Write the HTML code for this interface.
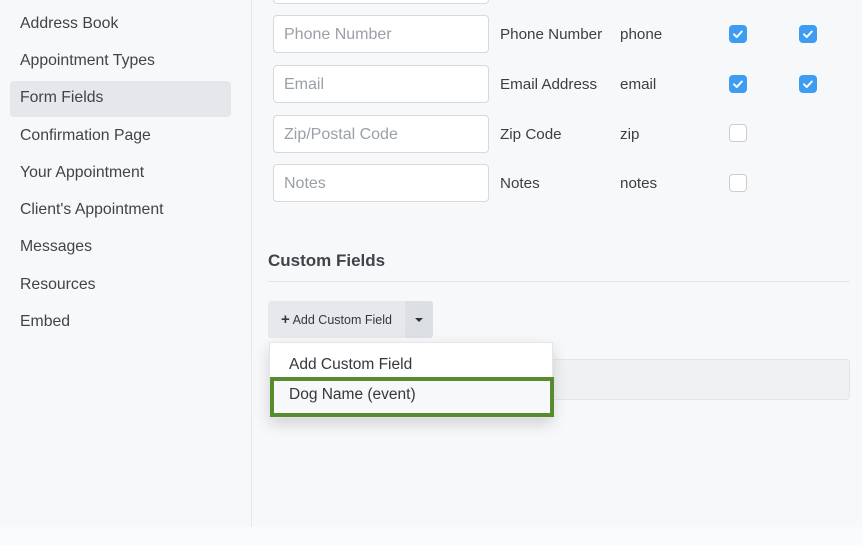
<!DOCTYPE html>
<html><head><style>
body{margin:0;width:862px;height:545px;background:#f7f8fa;font-family:"Liberation Sans",sans-serif;position:relative;overflow:hidden;color:#3a3f45}
.a{position:absolute}
.side{left:0;top:0;width:251px;height:527px;border-right:1px solid #e6e8eb}
.nav{left:20px;font-size:15.8px;color:#3f444a}
.inp{left:273px;border:1px solid #d6d9dd;border-radius:4px;background:#fff;font-size:16px;color:#9aa0a7;line-height:38px;padding-left:10px;box-sizing:border-box;width:216px;height:38px}
.lbl{left:500px;font-size:15.2px;color:#3a3f45}
.key{left:620px;font-size:15.2px;color:#3a3f45}
.cb{width:18px;height:18px;border-radius:4px;box-sizing:border-box}
.on{background:#3d9df2}
.off{border:1px solid #c9cdd2;background:#fff}
</style></head><body>
<div class="a side"></div>
<div class="a" style="left:10px;top:81px;width:221px;height:36px;background:#e5e7ea;border-radius:4px"></div>
<div class="a nav" style="top:15px">Address Book</div>
<div class="a nav" style="top:52px">Appointment Types</div>
<div class="a nav" style="top:89px">Form Fields</div>
<div class="a nav" style="top:127px">Confirmation Page</div>
<div class="a nav" style="top:164px">Your Appointment</div>
<div class="a nav" style="top:201px">Client's Appointment</div>
<div class="a nav" style="top:238px">Messages</div>
<div class="a nav" style="top:276px">Resources</div>
<div class="a nav" style="top:313px">Embed</div>

<div class="a inp" style="top:-34px"></div>
<div class="a inp" style="top:15px">Phone Number</div>
<div class="a inp" style="top:65px">Email</div>
<div class="a inp" style="top:115px">Zip/Postal Code</div>
<div class="a inp" style="top:164px">Notes</div>
<div class="a lbl" style="top:26px">Phone Number</div><div class="a key" style="top:26px">phone</div>
<div class="a lbl" style="top:76px">Email Address</div><div class="a key" style="top:76px">email</div>
<div class="a lbl" style="top:126px">Zip Code</div><div class="a key" style="top:126px">zip</div>
<div class="a lbl" style="top:175px">Notes</div><div class="a key" style="top:175px">notes</div>
<div class="a cb on" style="left:729px;top:25px"><svg width="18" height="18"><path d="M5 9.3l2.8 2.7 5-5.5" stroke="#fff" stroke-width="2" fill="none" stroke-linecap="round" stroke-linejoin="round"/></svg></div>
<div class="a cb on" style="left:799px;top:25px"><svg width="18" height="18"><path d="M5 9.3l2.8 2.7 5-5.5" stroke="#fff" stroke-width="2" fill="none" stroke-linecap="round" stroke-linejoin="round"/></svg></div>
<div class="a cb on" style="left:729px;top:75px"><svg width="18" height="18"><path d="M5 9.3l2.8 2.7 5-5.5" stroke="#fff" stroke-width="2" fill="none" stroke-linecap="round" stroke-linejoin="round"/></svg></div>
<div class="a cb on" style="left:799px;top:75px"><svg width="18" height="18"><path d="M5 9.3l2.8 2.7 5-5.5" stroke="#fff" stroke-width="2" fill="none" stroke-linecap="round" stroke-linejoin="round"/></svg></div>
<div class="a cb off" style="left:729px;top:124px"></div>
<div class="a cb off" style="left:729px;top:174px"></div>

<div class="a" style="left:268px;top:251px;font-size:17px;font-weight:bold;color:#3f444a">Custom Fields</div>
<div class="a" style="left:268px;top:281px;width:582px;height:1px;background:#e3e5e8"></div>
<div class="a" style="left:268px;top:301px;width:137px;height:37px;background:#e6e8eb;border-radius:3px 0 0 3px;font-size:12.5px;line-height:38px;color:#33383d;text-align:center"><b style="font-size:15px">+</b> Add Custom Field</div>
<div class="a" style="left:405px;top:301px;width:28px;height:37px;background:#dcdfe3;border-radius:0 3px 3px 0"><div class="a" style="left:10px;top:17px;border-left:4px solid transparent;border-right:4px solid transparent;border-top:4px solid #333"></div></div>
<div class="a" style="left:553px;top:359px;width:297px;height:41px;background:#f0f1f3;border:1px solid #e3e5e8;border-left:none;border-radius:0 4px 4px 0;box-sizing:border-box"></div>
<div class="a" style="left:269px;top:342px;width:284px;height:76px;background:#fff;border:1px solid #e3e5e8;box-sizing:border-box;box-shadow:0 6px 14px rgba(0,0,0,.15)"></div>
<div class="a" style="left:289px;top:356px;font-size:15.5px;color:#33383d">Add Custom Field</div>
<div class="a" style="left:270px;top:377px;width:284px;height:40px;border:4px solid #5a8a2e;box-sizing:border-box;background:#f7f8f9"></div>
<div class="a" style="left:289px;top:386px;font-size:15.5px;color:#33383d">Dog Name (event)</div>
<div class="a" style="left:0;top:527px;width:862px;height:18px;background:#fafbfc"></div>
</body></html>
